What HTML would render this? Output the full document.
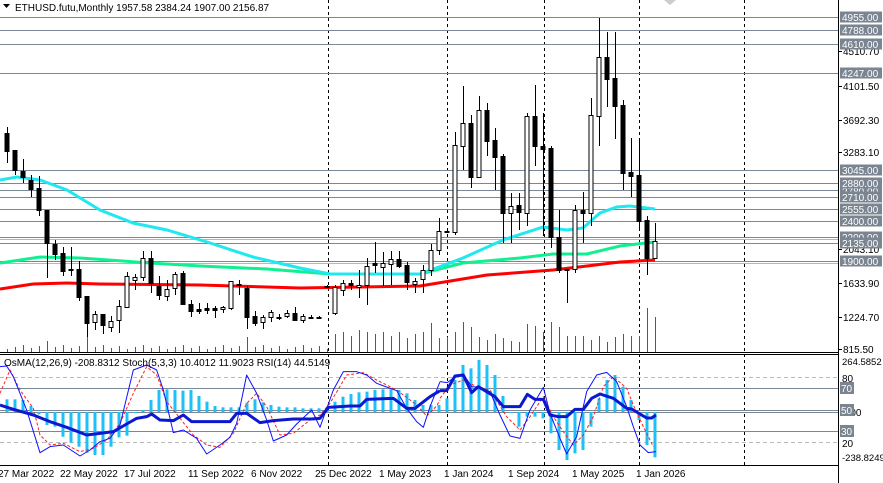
<!DOCTYPE html>
<html><head><meta charset="utf-8"><style>
html,body{margin:0;padding:0;background:#fff;width:883px;height:483px;overflow:hidden}
svg{display:block}
text{font-family:"Liberation Sans",sans-serif;font-size:10px;fill:#000}
</style></head><body>
<svg id="s" width="883" height="483" viewBox="0 0 883 483" xmlns="http://www.w3.org/2000/svg">
<rect width="883" height="483" fill="#fff"/>
<g id="g"></g>
<text x="15" y="11">ETHUSD.futu,Monthly  1957.58 2384.24 1907.00 2156.87</text>
<path d="M3 4h7l-3.5 4z" fill="#000"/>
<text x="4" y="366">OsMA(12,26,9) -208.8312  Stoch(5,3,3) 10.4012 11.9023  RSI(14) 44.5149</text>
<g id="t"></g>
</svg>
<script>
var g=document.getElementById('g'),T=document.getElementById('t'),NS='http://www.w3.org/2000/svg';
function el(n,a,p){var e=document.createElementNS(NS,n);for(var k in a)e.setAttribute(k,a[k]);(p||g).appendChild(e);return e;}
function line(x1,y1,x2,y2,c,w,d){var o={x1:x1,y1:y1,x2:x2,y2:y2,stroke:c,'stroke-width':w||1};if(d)o['stroke-dasharray']=d;el('line',o);}
function poly(pts,c,w,d,ox,oy,sc){var s=pts.map(function(p){return (ox+p[0]/sc)+','+(oy+p[1]/sc)}).join(' ');var o={points:s,fill:'none',stroke:c,'stroke-width':w,'stroke-linejoin':'round'};if(d)o['stroke-dasharray']=d;el('polyline',o);}
[328,447,544,639,744].forEach(function(x){line(x+.5,0,x+.5,465,'#000',1,'3,3');});
var lv=[17,30,44,73,170,183,190,197,209,221,237,243,261];
lv.forEach(function(y){line(0,y+.5,838,y+.5,'#7a8797',1);});
line(0,239.5,838,239.5,'#b0b8c2',1);line(0,263.5,838,263.5,'#b0b8c2',1);
var vol=[];for(var i=0;i<82;i++){var x=7+8*i;var h;
 if(x<330)h=3+((i*7)%5)+(i==5?8:0)+(i==10?12:0)+(i==30?12:0);else h=0;vol.push(h);}
var vh={335:18,343:20,351:16,359:22,367:20,375:18,383:20,391:16,399:20,407:14,415:18,423:20,431:29,439:14,447:15,455:20,463:30,471:25,479:15,487:12,495:18,503:14,511:11,519:10,527:28,535:26,543:20,551:30,559:25,567:16,575:16,583:16,591:12,599:16,607:10,615:15,623:18,631:16,639:16,647:44,655:35};
for(var i=0;i<82;i++){var x=7+8*i;var h=vh[x]||vol[i];if(h>0)line(x+.5,352,x+.5,352-h,'#208020',1);}
function mp(a,c,w){el('polyline',{points:a.map(function(p){return p.join(',')}).join(' '),fill:'none',stroke:c,'stroke-width':w});}
mp([[0,263],[40,257],[80,258],[150,263],[200,266],[267,269],[330,274],[420,274],[463,263],[520,258],[553,254],[587,254],[620,246],[655,242]],'#10f090',3);
mp([[0,289],[33,284],[67,283],[100,284],[200,285],[300,288],[420,286],[487,275],[553,270],[587,266],[620,262],[655,260]],'#ff0000',3);
mp([[0,180],[17,177],[40,180],[67,190],[100,210],[133,223],[167,230],[207,242],[253,257],[300,268],[330,274],[420,274],[463,258],[503,240],[543,227],[567,230],[583,228],[600,213],[617,207],[630,206],[655,209]],'#20e8f0',3);
var C=[[133,151,127,163,0],[150,170,150,175,0],[171,177,159,183,0],[180,189,175,197,0],[188,210,176,216,0],[210,243,210,278,0],[244,254,240,260,0],[253,271,247,276,0],[269,270,247,276,0],[269,297,261,301,0],[296,323,296,337,0],[314,322,311,330,1],[314,325,314,334,0],[321,327,316,332,1],[306,320,300,333,1],[276,307,272,307,1],[277,280,274,290,1],[258,277,251,281,1],[258,283,251,293,0],[286,295,276,300,0],[289,296,280,301,1],[274,288,272,295,1],[273,304,271,305,0],[304,311,300,317,0],[309,311,303,314,0],[308,310,303,314,0],[308,310,306,318,0],[307,309,306,313,1],[281,308,281,310,1],[284,285,280,295,0],[288,317,286,329,0],[316,323,311,326,0],[317,322,315,329,1],[312,317,310,322,1],[317,318,314,320,0],[313,316,310,318,1],[313,320,307,320,0],[316,320,314,323,1],[317,318,315,319,0],[317,318,316,319,0],[286,287,285,288,0],[287,313,285,315,1],[283,290,280,296,1],[283,285,280,290,0],[285,287,270,298,1],[266,285,258,305,1],[263,265,242,273,0],[263,267,252,286,1],[259,264,251,285,1],[259,266,251,268,0],[265,282,262,290,0],[281,284,278,293,1],[270,279,265,293,1],[250,270,244,276,1],[231,250,218,255,1],[231,232,231,232,0],[145,232,132,235,1],[123,146,86,170,1],[123,177,115,188,0],[110,177,96,178,1],[110,141,103,156,0],[140,157,128,190,0],[156,213,154,243,0],[206,213,193,243,1],[205,212,193,230,0],[116,213,113,226,1],[116,146,85,166,0],[146,149,113,236,0],[148,237,146,248,0],[237,270,210,273,0],[269,270,269,303,0],[210,269,205,273,1],[210,213,192,243,0],[115,213,98,226,1],[57,116,18,146,1],[57,79,32,107,0],[78,106,32,139,0],[105,173,100,190,0],[172,176,138,197,0],[175,221,141,230,0],[220,258,216,275,0],[241,258,223,258,1]];
C.forEach(function(c,i){var x=7+8*i;line(x+.5,c[2],x+.5,c[3],'#000',1);
 var h=Math.max(1,c[1]-c[0]);el('rect',{x:x-2,y:c[0]+.5,width:4,height:h,fill:c[4]?'#fff':'#000',stroke:'#000','stroke-width':1});});
line(0,352.5,838,352.5,'#000',1);line(0,354.5,838,354.5,'#000',1);line(0,465.5,838,465.5,'#000',1);line(838.5,0,838.5,483,'#000',1);
line(0,377.5,838,377.5,'#bbb',1,'4,3');line(0,442.5,838,442.5,'#bbb',1,'4,3');
[388,410,431].forEach(function(y){line(0,y+.5,838,y+.5,'#7a8797',1);});
line(0,412.5,838,412.5,'#7a8797',1);
var H1=[148,148,150,168,193,225,230,260,278,290,308,315,315,290,262,257,188,180,150,120,118,120,122,120,138,155,168,172,172,172,158,148,157,165,170,172,172,175,175,175,172,155,140,132,127,125,120,118,118,120,130,150,165,165,165,150];
var H2=[145,90,45,55,30,45,75,138,188,230,200,200,205,250,300,330,310,300,230,145,90,75,110,150,210,285,322];
function bar(x,v){var y=350+v/3;var z=412;var t=Math.min(y,z),b=Math.max(y,z);el('rect',{x:x-1.5,y:t,width:3,height:Math.max(1,b-t),fill:'#1ec0f8'});}
H1.forEach(function(v,i){bar(7+8*i,v);});H2.forEach(function(v,i){bar(447+8*i,v);});
poly([[0,130],[30,60],[60,120],[100,175],[120,255],[150,285],[190,280],[240,305],[280,295],[320,270],[360,220],[400,130],[440,50],[470,75],[500,155],[540,205],[580,255],[620,285],[660,292],[700,250],[740,160],[770,130],[800,170],[840,255],[880,250],[930,210],[960,195],[990,160],[1040,75],[1090,68],[1130,90],[1190,120],[1250,165],[1280,198],[1310,168],[1320,150]],'#ff2020',1,'3,2',0,350,3);
poly([[0,145],[30,105],[70,90],[110,110],[150,120],[200,200],[240,240],[270,200],[310,140],[340,200],[370,245],[400,285],[430,255],[460,200],[490,110],[520,80],[560,115],[580,165],[610,230],[640,290]],'#ff2020',1,'3,2',440,350,3);
poly([[0,50],[20,48],[40,80],[80,180],[120,308],[150,290],[190,285],[240,318],[270,300],[300,275],[330,265],[360,225],[400,60],[440,45],[470,60],[490,120],[520,248],[550,240],[590,265],[620,312],[660,285],[690,262],[710,220],[740,75],[770,130],[800,210],[820,273],[860,255],[890,222],[935,180],[960,232],[1000,120],[1030,65],[1070,65],[1100,75],[1130,100],[1190,122],[1220,175],[1250,215],[1270,232],[1290,170],[1320,95]],'#1010ff',1,null,0,350,3);
poly([[0,95],[22,98],[45,80],[70,72],[95,110],[120,112],[150,125],[180,195],[210,258],[240,265],[270,180],[310,112],[330,190],[360,265],[380,312],[410,260],[440,125],[470,75],[500,67],[530,95],[560,170],[580,230],[600,285],[625,308],[648,305]],'#1010ff',1,null,440,350,3);
poly([[0,165],[40,178],[100,195],[150,215],[200,232],[260,255],[300,250],[340,245],[380,222],[410,205],[440,200],[455,192],[480,210],[520,212],[550,195],[575,215],[690,215],[710,190],[740,190],[780,218],[820,212],[880,207],[935,207],[960,205],[985,172],[1050,168],[1080,168],[1100,148],[1180,145],[1220,175],[1245,175],[1290,140],[1320,122]],'#0c18d0',3,null,0,350,3);
poly([[0,122],[20,122],[45,78],[70,75],[95,128],[115,110],[145,128],[165,140],[190,170],[240,170],[262,133],[285,148],[310,148],[330,195],[355,200],[380,200],[405,178],[430,178],[455,145],[480,132],[520,145],[560,175],[575,177],[620,204],[635,204],[648,195]],'#0c18d0',3,null,440,350,3);
function lab(y,txt){el('rect',{x:840,y:y-5.5,width:42,height:11,fill:'#7a8591'},T);var t=el('text',{x:842,y:y+4,style:'fill:#fff'},T);t.textContent=txt;}
function tick(y,txt){line(838,y+.5,842,y+.5,'#000',1);var t=el('text',{x:843,y:y+4},T);t.textContent=txt;}
[[51,'4510.70'],[86,'4101.50'],[120,'3692.30'],[152,'3283.10'],[249,'2043.10'],[283,'1633.90'],[317,'1224.70'],[349,'815.50']].forEach(function(a){tick(a[0],a[1]);});
[[191,'2780.00'],[209,'2555.00'],[237,'2200.00'],[17,'4955.00'],[30,'4788.00'],[44,'4610.00'],[73,'4247.00'],[170,'3045.00'],[183,'2880.00'],[197,'2710.00'],[221,'2400.00'],[243,'2135.00'],[261,'1900.00']].forEach(function(a){lab(a[0],a[1]);});
[[361,'264.5852'],[378,'80'],[443,'20'],[412,'0.00'],[457,'-238.8249']].forEach(function(a){var t=el('text',{x:842,y:a[0]+4,style:a[1].length>6?'font-size:9.5px':''},T);t.textContent=a[1];});
[[388,'70'],[410,'50'],[431,'30']].forEach(function(a){el('rect',{x:840,y:a[0]-6,width:14,height:12,fill:'#7a8591'},T);var t=el('text',{x:841,y:a[0]+4,style:'fill:#fff'},T);t.textContent=a[1];});
[[0,'27 Mar 2022'],[62,'22 May 2022'],[126,'17 Jul 2022'],[190,'11 Sep 2022'],[253,'6 Nov 2022'],[317,'25 Dec 2022'],[381,'1 May 2023'],[446,'1 Jan 2024'],[510,'1 Sep 2024'],[574,'1 May 2025'],[638,'1 Jan 2026']].forEach(function(a){var t=el('text',{x:a[0]-2,y:477},T);t.textContent=a[1];});
el('path',{d:'M664 0l6 5 6-5z',fill:'#ccc'},T);
</script>
</body></html>
